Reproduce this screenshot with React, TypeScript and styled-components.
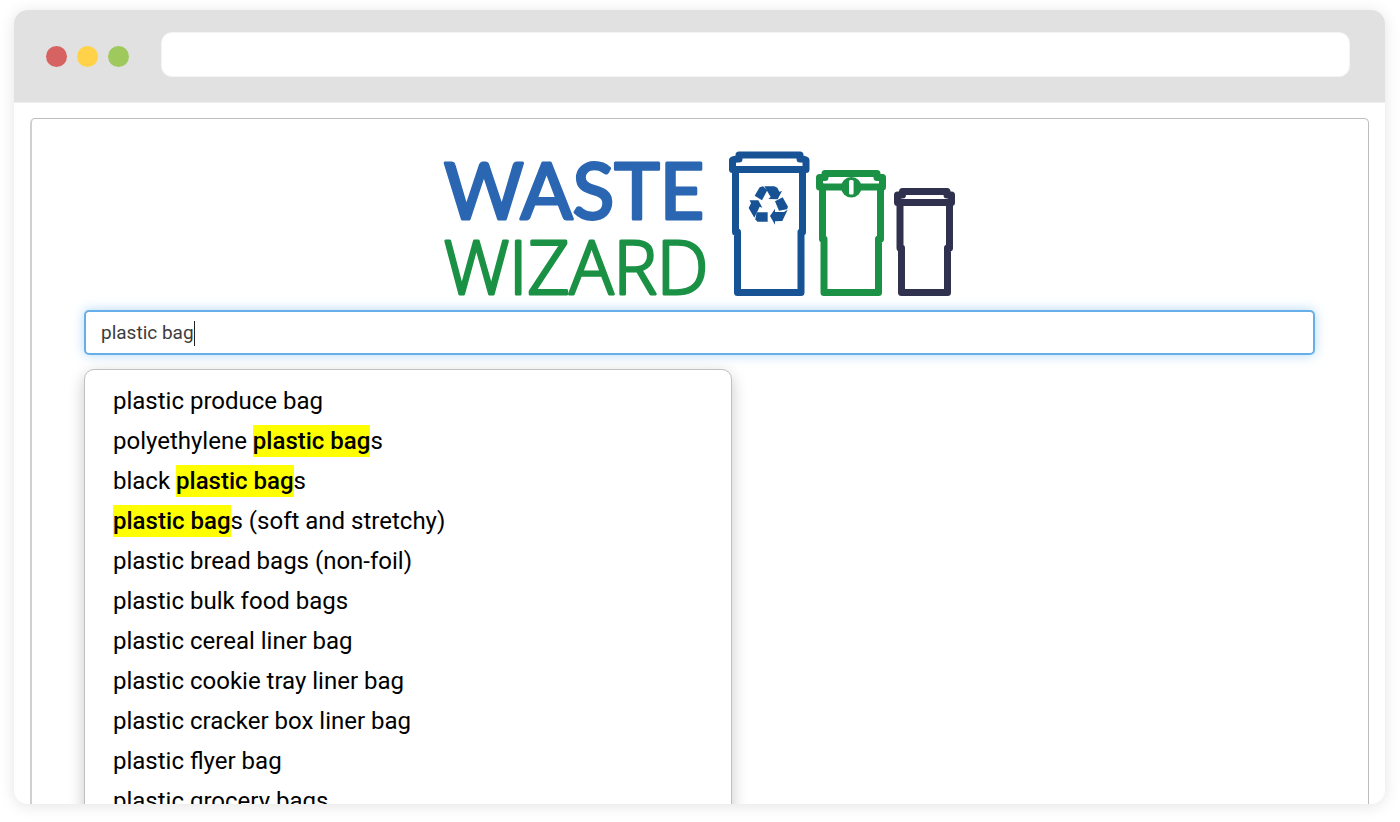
import React, { useState } from "react";
import styled, { createGlobalStyle } from "styled-components";

const GlobalStyle = createGlobalStyle`
  *, *::before, *::after { box-sizing: border-box; }
  body {
    margin: 0;
    background: #fff;
    color: #000;
    font-family: Roboto, "Liberation Sans", sans-serif;
  }
`;

const Page = styled.div`
  height: 100vh;
  padding: 10px 15px 18px 14px;
`;

const BrowserWindow = styled.div`
  display: flex;
  flex-direction: column;
  height: 100%;
  overflow: hidden;
  border-radius: 14px;
  background: #fff;
  box-shadow: 0 2px 16px rgba(0, 0, 0, 0.11);
`;

const TitleBar = styled.header`
  display: flex;
  flex: none;
  align-items: flex-start;
  height: 93px;
  padding: 22px 35px 0 32px;
  border-bottom: 1px solid #efefef;
  background: #e1e1e1;
`;

const Lights = styled.div`
  display: flex;
  gap: 10px;
  margin-right: 32px;
  padding-top: 14px;
`;

const Light = styled.span<{ $color: string }>`
  width: 21px;
  height: 21px;
  border-radius: 50%;
  background: ${(p) => p.$color};
`;

const AddressBar = styled.input`
  flex: 1;
  min-width: 0;
  height: 45px;
  padding: 0 16px;
  border: 1px solid #f4f4f4;
  border-radius: 11px;
  background: #fff;
  font: 18px Roboto, sans-serif;
  outline: none;
`;

const Viewport = styled.div`
  display: flex;
  flex: 1;
  min-height: 0;
  padding: 15px 16px 0;
`;

const Panel = styled.main`
  flex: 1;
  min-width: 0;
  padding: 30px 53px 0 52px;
  border: 1px solid #bdbdbd;
  border-left: 2px solid #d0d0d0;
  border-bottom: 0;
  border-radius: 5px 5px 0 0;
`;

const Logo = styled.svg`
  display: block;
  width: 513px;
  height: 150px;
  margin: 0 auto 11px;
  overflow: visible;
`;

const LogoWord = styled.text<{ $color: string; $font: string; $size: number; $weight: number }>`
  font-family: ${(p) => p.$font}, sans-serif;
  font-size: ${(p) => p.$size}px;
  font-weight: ${(p) => p.$weight};
  fill: ${(p) => p.$color};
  stroke: ${(p) => p.$color};
  stroke-width: 3px;
  stroke-linejoin: round;
`;

const Bin = styled.g<{ $color: string }>`
  color: ${(p) => p.$color};
  fill: none;
  stroke: currentColor;
  stroke-width: 7px;
  stroke-linejoin: round;
  stroke-linecap: round;
`;

const SearchField = styled.label`
  display: flex;
  align-items: center;
  height: 45px;
  padding: 1px 15px 0;
  border: 2px solid #66afe9;
  border-radius: 5px;
  background: #fff;
  box-shadow: 0 0 12px rgba(82, 168, 236, 0.45);
  cursor: text;
`;

const SearchInput = styled.input`
  field-sizing: content;
  max-width: 100%;
  padding: 0;
  border: 0;
  outline: none;
  background: transparent;
  color: #3c3c3c;
  caret-color: transparent;
  font: 19px/24px Roboto, sans-serif;
`;

const Caret = styled.span`
  width: 1px;
  height: 25px;
  background: #222;
`;

const Suggestions = styled.ul`
  max-width: 648px;
  margin: 14px 0 0;
  padding: 11px 28px;
  border: 1px solid #c0c0c0;
  border-radius: 10px;
  background: #fff;
  box-shadow: 0 5px 16px rgba(0, 0, 0, 0.22);
  list-style: none;
`;

const Suggestion = styled.li`
  font-size: 24px;
  line-height: 40px;
  white-space: nowrap;
`;

const Mark = styled.mark`
  padding: 2px 0;
  background: #ff0;
  color: #000;
  font-weight: 500;
`;

const items = [
  "plastic produce bag",
  "polyethylene plastic bags",
  "black plastic bags",
  "plastic bags (soft and stretchy)",
  "plastic bread bags (non-foil)",
  "plastic bulk food bags",
  "plastic cereal liner bag",
  "plastic cookie tray liner bag",
  "plastic cracker box liner bag",
  "plastic flyer bag",
  "plastic grocery bags",
];

function Highlighted({ text, query }: { text: string; query: string }) {
  const at = query ? text.indexOf(query) : -1;
  if (at < 0) return <>{text}</>;
  return (
    <>
      {text.slice(0, at)}
      <Mark>{query}</Mark>
      {text.slice(at + query.length)}
    </>
  );
}

function WasteWizardLogo() {
  return (
    <Logo viewBox="0 0 513 150" role="img" aria-label="Waste Wizard">
      <LogoWord x="1" y="70" $color="#2a66b1" $font="Lato" $size={77} $weight={400}>WASTE</LogoWord>
      <LogoWord x="1" y="145" $color="#1a9144" $font="Open Sans" $size={73} $weight={300}>WIZARD</LogoWord>
      <Bin $color="#175294">
        <path d="M292.5 21V83H294.5V143.5H358V83H359.5V21" />
        <path d="M289.5 20.5V11Q290 10 296 10V6H357V10Q363 10 363 11V20.5Z" />
        <g transform="translate(272 -9) scale(.3333)" fill="currentColor" stroke="none">
          <path d="M119 167L134 142L144 139L157 151L141 181Z" />
          <path d="M148 139H178L187 143L193 155L201 153L188 178L160 177L167 171Z" />
          <path d="M180 184L203 172L219 200L216 208L192 212Z" />
          <path d="M218 209L202 243L180 244V254L165 228L180 206V216H207Z" />
          <path d="M125 217H158V245H127L121 238Z" />
          <path d="M104 181H130L142 203L134 200L118 233L101 204L108 190Z" />
        </g>
      </Bin>
      <Bin $color="#1a9144">
        <path d="M379.5 38V90H381V143.5H435.5V90H437.5V38" />
        <path d="M376.5 38V28.5H382V24.5H434V28.5H439.5V38Z" />
        <circle cx="408.3" cy="38.3" r="10.3" fill="currentColor" stroke="none" />
        <rect x="406" y="31" width="4.6" height="14.6" rx="1.5" fill="#fff" stroke="none" />
      </Bin>
      <Bin $color="#30304f">
        <path d="M457 53V99H458.5V143.5H504.5V99H506.5V53" />
        <path d="M454.5 53.5V46H459.5V42.5H504V46H508.5V53.5Z" />
      </Bin>
    </Logo>
  );
}

export default function App() {
  const [query, setQuery] = useState("plastic bag");
  return (
    <Page>
      <GlobalStyle />
      <BrowserWindow>
        <TitleBar>
          <Lights>
            <Light $color="#d66262" />
            <Light $color="#ffd24a" />
            <Light $color="#9fc85d" />
          </Lights>
          <AddressBar type="text" aria-label="Address" />
        </TitleBar>
        <Viewport>
          <Panel>
            <WasteWizardLogo />
            <SearchField>
              <SearchInput
                type="text"
                aria-label="Search for an item"
                value={query}
                onChange={(e) => setQuery(e.target.value)}
              />
              <Caret />
            </SearchField>
            <Suggestions>
              {items.map((item) => (
                <Suggestion key={item}>
                  <Highlighted text={item} query={query} />
                </Suggestion>
              ))}
            </Suggestions>
          </Panel>
        </Viewport>
      </BrowserWindow>
    </Page>
  );
}
